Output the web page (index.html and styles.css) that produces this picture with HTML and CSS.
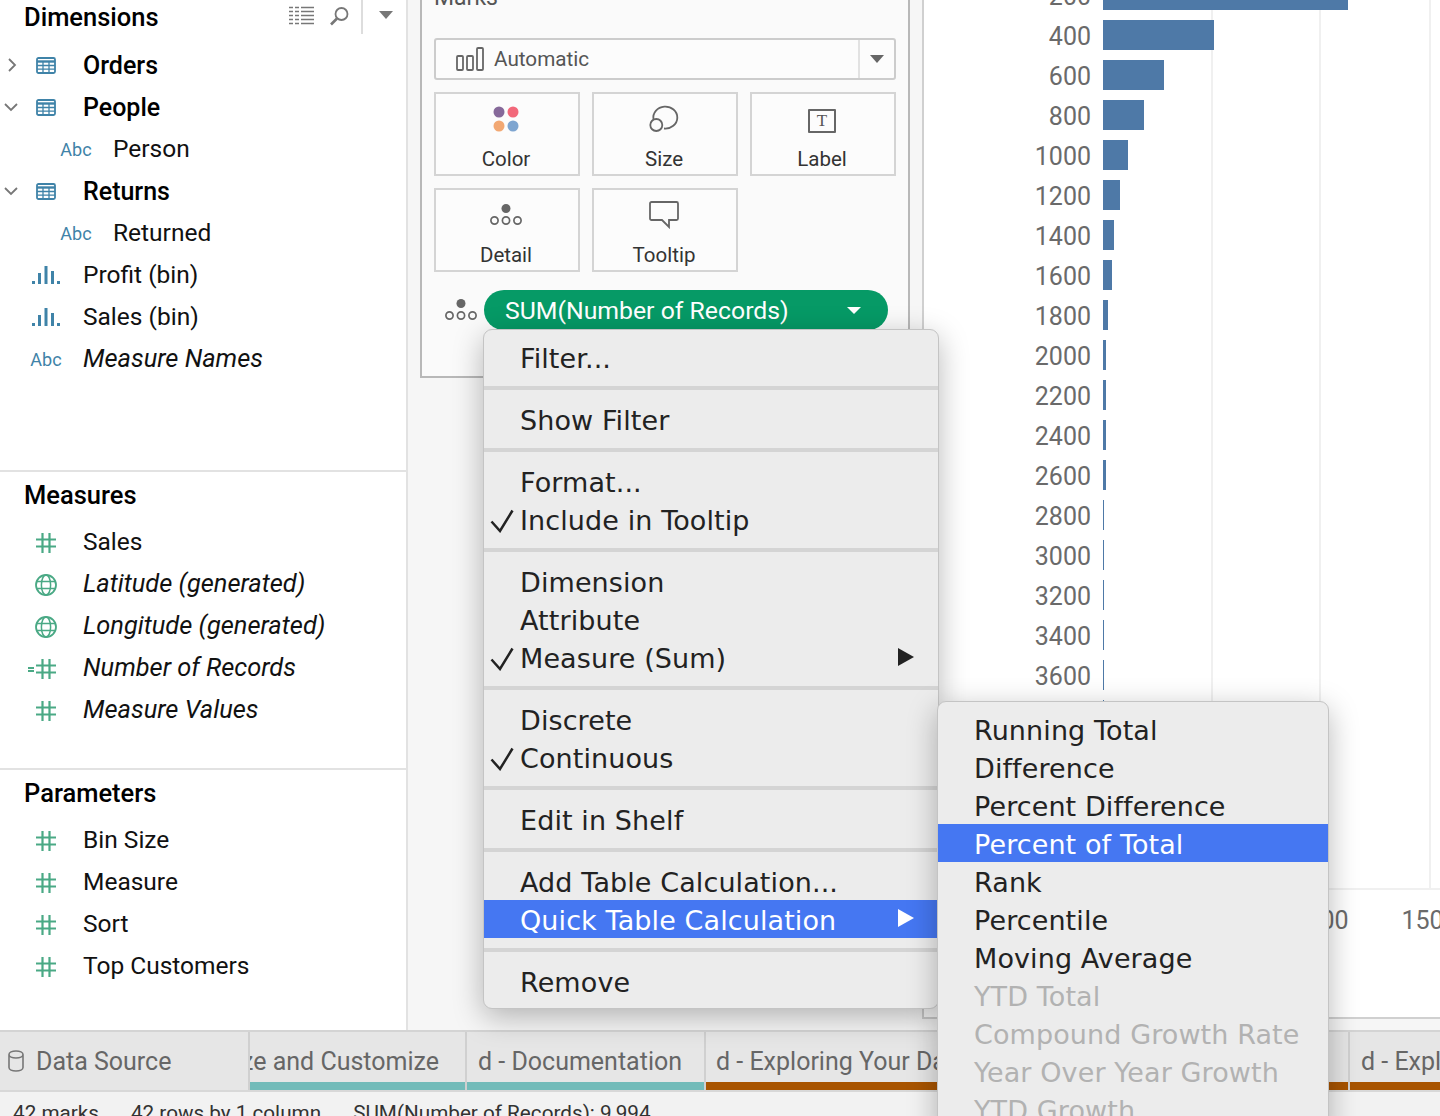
FILE: index.html
```html
<!DOCTYPE html>
<html lang="en">
<head>
<meta charset="utf-8">
<title>Tableau worksheet</title>
<link rel="stylesheet" href="styles.css">
</head>
<body>
<svg class="defs" width="0" height="0" aria-hidden="true">
  <symbol id="i-table" viewBox="0 0 20 17"><rect x="1" y="1" width="18" height="15" rx="1.500" fill="none" stroke="currentColor" stroke-width="1.800"/><path d="M1 4.500h18" stroke="currentColor" stroke-width="2.400"/><path d="M1 8.500h18M1 12.200h18M7 4v12M13 4v12" stroke="currentColor" stroke-width="1.300" fill="none"/></symbol>
  <symbol id="i-hash" viewBox="0 0 20 20"><path d="M6.500 0v20M13.500 0v20M0 6.500h20M0 13.500h20" stroke="currentColor" stroke-width="2.200" fill="none"/></symbol>
  <symbol id="i-globe" viewBox="0 0 22 22"><circle cx="11" cy="11" r="10" fill="none" stroke="currentColor" stroke-width="1.800"/><ellipse cx="11" cy="11" rx="4.600" ry="10" fill="none" stroke="currentColor" stroke-width="1.500"/><path d="M1.500 7.500h19M1.500 14.500h19" stroke="currentColor" stroke-width="1.500"/></symbol>
  <symbol id="i-bins" viewBox="0 0 28 18"><path d="M0 15h3v3H0zM6 7h3v11H6zM12.500 0h3v18h-3zM19 5h3v13h-3zM25 15h3v3h-3z" fill="currentColor"/></symbol>
  <symbol id="i-chev-r" viewBox="0 0 10 14"><path d="M2 1l6 6-6 6" fill="none" stroke="currentColor" stroke-width="1.800"/></symbol>
  <symbol id="i-chev-d" viewBox="0 0 14 10"><path d="M1 2l6 6 6-6" fill="none" stroke="currentColor" stroke-width="1.800"/></symbol>
  <symbol id="i-detail" viewBox="0 0 32 22"><circle cx="16" cy="4.500" r="4.500" fill="currentColor"/><circle cx="4.500" cy="16.500" r="3.600" fill="none" stroke="currentColor" stroke-width="1.700"/><circle cx="16" cy="16.500" r="3.600" fill="none" stroke="currentColor" stroke-width="1.700"/><circle cx="27.500" cy="16.500" r="3.600" fill="none" stroke="currentColor" stroke-width="1.700"/></symbol>
  <symbol id="i-check" viewBox="0 0 24 24"><path d="M1.500 12.500l8.500 9.500L22.500 1.500" fill="none" stroke="currentColor" stroke-width="2.500"/></symbol>
</svg>

<div class="app">
  <div class="main">
    <aside class="sidebar">
      <section class="group group-dim">
        <header class="dim-head">
          <h2 class="group-title">Dimensions</h2>
          <svg class="tool tool-list" width="25" height="19" viewBox="0 0 25 19"><path d="M0 1.500h4M6 1.500h4M12 1.500h13M0 5.500h4M6 5.500h4M12 5.500h13M0 9.500h4M6 9.500h4M12 9.500h13M0 13.500h4M6 13.500h4M12 13.500h13M0 17.500h4M6 17.500h4M12 17.500h13" stroke="#777" stroke-width="1.500" fill="none"/></svg>
          <svg class="tool tool-search" width="19" height="19" viewBox="0 0 19 19"><circle cx="11.500" cy="7" r="6" fill="none" stroke="#777" stroke-width="1.800"/><path d="M7 11.500L1 17.500" stroke="#777" stroke-width="2.600" fill="none"/></svg>
          <span class="tool-sep"></span>
          <span class="tri tri-menu"></span>
        </header>
        <div class="row"><span class="tw"><svg class="tw-r" width="10" height="14"><use href="#i-chev-r"/></svg></span><span class="ic ic-blue"><svg width="20" height="17"><use href="#i-table"/></svg></span><span class="lbl strong">Orders</span></div>
        <div class="row"><span class="tw"><svg class="tw-d" width="14" height="10"><use href="#i-chev-d"/></svg></span><span class="ic ic-blue"><svg width="20" height="17"><use href="#i-table"/></svg></span><span class="lbl strong">People</span></div>
        <div class="row nested"><span class="tw"></span><span class="ic abc">Abc</span><span class="lbl">Person</span></div>
        <div class="row"><span class="tw"><svg class="tw-d" width="14" height="10"><use href="#i-chev-d"/></svg></span><span class="ic ic-blue"><svg width="20" height="17"><use href="#i-table"/></svg></span><span class="lbl strong">Returns</span></div>
        <div class="row nested"><span class="tw"></span><span class="ic abc">Abc</span><span class="lbl">Returned</span></div>
        <div class="row"><span class="tw"></span><span class="ic ic-blue"><svg width="28" height="18"><use href="#i-bins"/></svg></span><span class="lbl">Profit (bin)</span></div>
        <div class="row"><span class="tw"></span><span class="ic ic-blue"><svg width="28" height="18"><use href="#i-bins"/></svg></span><span class="lbl">Sales (bin)</span></div>
        <div class="row"><span class="tw"></span><span class="ic abc">Abc</span><span class="lbl em">Measure Names</span></div>
      </section>
      <section class="group group-mea">
        <h2 class="group-title sec-title">Measures</h2>
        <div class="row"><span class="tw"></span><span class="ic ic-green"><svg width="20" height="20"><use href="#i-hash"/></svg></span><span class="lbl">Sales</span></div>
        <div class="row"><span class="tw"></span><span class="ic ic-green"><svg width="22" height="22"><use href="#i-globe"/></svg></span><span class="lbl em">Latitude (generated)</span></div>
        <div class="row"><span class="tw"></span><span class="ic ic-green"><svg width="22" height="22"><use href="#i-globe"/></svg></span><span class="lbl em">Longitude (generated)</span></div>
        <div class="row"><span class="tw"></span><span class="ic ic-green calc"><span class="calc-eq"></span><svg width="20" height="20"><use href="#i-hash"/></svg></span><span class="lbl em">Number of Records</span></div>
        <div class="row"><span class="tw"></span><span class="ic ic-green"><svg width="20" height="20"><use href="#i-hash"/></svg></span><span class="lbl em">Measure Values</span></div>
      </section>
      <section class="group group-par">
        <h2 class="group-title sec-title">Parameters</h2>
        <div class="row"><span class="tw"></span><span class="ic ic-green"><svg width="20" height="20"><use href="#i-hash"/></svg></span><span class="lbl">Bin Size</span></div>
        <div class="row"><span class="tw"></span><span class="ic ic-green"><svg width="20" height="20"><use href="#i-hash"/></svg></span><span class="lbl">Measure</span></div>
        <div class="row"><span class="tw"></span><span class="ic ic-green"><svg width="20" height="20"><use href="#i-hash"/></svg></span><span class="lbl">Sort</span></div>
        <div class="row"><span class="tw"></span><span class="ic ic-green"><svg width="20" height="20"><use href="#i-hash"/></svg></span><span class="lbl">Top Customers</span></div>
      </section>
    </aside>

    <div class="shelves">
      <div class="marks">
        <div class="marks-title">Marks</div>
        <div class="mark-type">
          <svg class="mt-icon" width="28" height="24" viewBox="0 0 28 24"><rect x="1" y="9" width="6" height="14" rx="1" fill="none" stroke="#666" stroke-width="1.800"/><rect x="11" y="9" width="6" height="14" rx="1" fill="none" stroke="#666" stroke-width="1.800"/><rect x="21" y="1" width="6" height="22" rx="1" fill="none" stroke="#666" stroke-width="1.800"/></svg>
          <span class="mt-text">Automatic</span>
          <span class="mt-drop"><span class="tri tri-small"></span></span>
        </div>
        <div class="cards">
          <div class="card">
            <svg width="26" height="26" viewBox="0 0 26 26"><circle cx="6" cy="6" r="5.500" fill="#86699a"/><circle cx="20" cy="6" r="5.500" fill="#f2687a"/><circle cx="6" cy="20" r="5.500" fill="#f2a873"/><circle cx="20" cy="20" r="5.500" fill="#7ea5d0"/></svg>
            <span>Color</span>
          </div>
          <div class="card">
            <svg width="30" height="28" viewBox="0 0 30 28"><path d="M4.500 14.500A12 11 0 1 1 15 23.500" fill="none" stroke="#666" stroke-width="1.800"/><circle cx="7.300" cy="20" r="6" fill="none" stroke="#666" stroke-width="1.800"/></svg>
            <span>Size</span>
          </div>
          <div class="card">
            <span class="t-box">T</span>
            <span>Label</span>
          </div>
          <div class="card">
            <svg class="i-gray" width="32" height="22"><use href="#i-detail"/></svg>
            <span>Detail</span>
          </div>
          <div class="card">
            <svg width="30" height="28" viewBox="0 0 30 28"><path d="M2.500 1h25a1.500 1.500 0 0 1 1.500 1.500v15a1.500 1.500 0 0 1-1.500 1.500H20v7l-7-7H2.500A1.500 1.500 0 0 1 1 17.500v-15A1.500 1.500 0 0 1 2.500 1z" fill="none" stroke="#666" stroke-width="1.800"/></svg>
            <span>Tooltip</span>
          </div>
        </div>
        <div class="pill-row">
          <svg class="i-gray" width="32" height="22"><use href="#i-detail"/></svg>
          <div class="pill"><span>SUM(Number of Records)</span><span class="tri tri-white"></span></div>
        </div>
      </div>
    </div>

    <div class="chart">
      <div class="plot">
        <div class="bar-row"><span class="tick">200</span><span class="bar" style="width:245px"></span></div>
        <div class="bar-row"><span class="tick">400</span><span class="bar" style="width:111px"></span></div>
        <div class="bar-row"><span class="tick">600</span><span class="bar" style="width:61px"></span></div>
        <div class="bar-row"><span class="tick">800</span><span class="bar" style="width:41px"></span></div>
        <div class="bar-row"><span class="tick">1000</span><span class="bar" style="width:25px"></span></div>
        <div class="bar-row"><span class="tick">1200</span><span class="bar" style="width:17px"></span></div>
        <div class="bar-row"><span class="tick">1400</span><span class="bar" style="width:11px"></span></div>
        <div class="bar-row"><span class="tick">1600</span><span class="bar" style="width:9px"></span></div>
        <div class="bar-row"><span class="tick">1800</span><span class="bar" style="width:5px"></span></div>
        <div class="bar-row"><span class="tick">2000</span><span class="bar" style="width:3px"></span></div>
        <div class="bar-row"><span class="tick">2200</span><span class="bar" style="width:3px"></span></div>
        <div class="bar-row"><span class="tick">2400</span><span class="bar" style="width:3px"></span></div>
        <div class="bar-row"><span class="tick">2600</span><span class="bar" style="width:3px"></span></div>
        <div class="bar-row"><span class="tick">2800</span><span class="bar" style="width:1px"></span></div>
        <div class="bar-row"><span class="tick">3000</span><span class="bar" style="width:1px"></span></div>
        <div class="bar-row"><span class="tick">3200</span><span class="bar" style="width:1px"></span></div>
        <div class="bar-row"><span class="tick">3400</span><span class="bar" style="width:1px"></span></div>
        <div class="bar-row"><span class="tick">3600</span><span class="bar" style="width:1px"></span></div>
        <div class="bar-row"><span class="tick">3800</span><span class="bar" style="width:1px"></span></div>
        <div class="bar-row"><span class="tick">4000</span><span class="bar" style="width:1px"></span></div>
        <div class="bar-row"><span class="tick">4200</span><span class="bar" style="width:1px"></span></div>
        <div class="bar-row"><span class="tick">4400</span><span class="bar" style="width:1px"></span></div>
        <div class="bar-row"><span class="tick">4600</span><span class="bar" style="width:1px"></span></div>
      </div>
      <div class="axis">
        <span>500</span><span>1000</span><span>1500</span>
      </div>
    </div>
  </div>

  <div class="tabs">
    <div class="tab tab-source">
      <svg width="16" height="22" viewBox="0 0 16 22"><path d="M1 4.500C1 2.500 4 1 8 1s7 1.500 7 3.500v13c0 2-3 3.500-7 3.500s-7-1.500-7-3.500zM1 4.500C1 6.500 4 8 8 8s7-1.500 7-3.500" fill="none" stroke="#777" stroke-width="1.600"/></svg>
      <span>Data Source</span>
    </div>
    <div class="tab tab-a teal"><span>d - Visualize and Customize</span></div>
    <div class="tab tab-b teal"><span>d - Documentation</span></div>
    <div class="tab tab-c rust"><span>d - Exploring Your Data</span></div>
    <div class="tab tab-d rust"><span>d - Exploring Your Data</span></div>
  </div>
  <div class="status">
    <span class="st-a">42 marks</span><span class="st-b">42 rows by 1 column</span><span>SUM(Number of Records): 9,994</span>
  </div>
</div>

<nav class="menu menu-main">
  <div class="m-sec first"><div class="mi">Filter...</div></div>
  <div class="m-sec"><div class="mi">Show Filter</div></div>
  <div class="m-sec">
    <div class="mi">Format...</div>
    <div class="mi"><svg class="chk" width="24" height="24"><use href="#i-check"/></svg>Include in Tooltip</div>
  </div>
  <div class="m-sec">
    <div class="mi">Dimension</div>
    <div class="mi">Attribute</div>
    <div class="mi"><svg class="chk" width="24" height="24"><use href="#i-check"/></svg>Measure (Sum)<span class="sub-arrow"></span></div>
  </div>
  <div class="m-sec">
    <div class="mi">Discrete</div>
    <div class="mi"><svg class="chk" width="24" height="24"><use href="#i-check"/></svg>Continuous</div>
  </div>
  <div class="m-sec"><div class="mi">Edit in Shelf</div></div>
  <div class="m-sec m-calc">
    <div class="mi">Add Table Calculation...</div>
    <div class="mi hot">Quick Table Calculation<span class="sub-arrow"></span></div>
  </div>
  <div class="m-sec last"><div class="mi">Remove</div></div>
</nav>

<nav class="menu menu-sub">
  <div class="mi">Running Total</div>
  <div class="mi">Difference</div>
  <div class="mi">Percent Difference</div>
  <div class="mi hot">Percent of Total</div>
  <div class="mi">Rank</div>
  <div class="mi">Percentile</div>
  <div class="mi">Moving Average</div>
  <div class="mi off">YTD Total</div>
  <div class="mi off">Compound Growth Rate</div>
  <div class="mi off">Year Over Year Growth</div>
  <div class="mi off">YTD Growth</div>
</nav>
</body>
</html>
```

FILE: styles.css
```css
* { box-sizing: border-box; }
html, body { margin: 0; padding: 0; height: 1116px; overflow: hidden; }
body { position: relative; width: 1440px; background: #fff; font-family: Roboto, "Liberation Sans", sans-serif; color: #111; }
.defs { position: absolute; }
.app { display: flex; flex-direction: column; height: 1116px; overflow: hidden; }
.main { display: grid; grid-template-columns: 408px 514px 1fr; height: 1030px; overflow: hidden; background: #f6f6f6; }

/* data pane */
.sidebar { background: #fff; border-right: 2px solid #e2e2e2; display: flex; flex-direction: column; }
.group-dim { height: 470px; }
.group-mea { height: 298px; border-top: 2px solid #e2e2e2; }
.group-par { flex: 1; border-top: 2px solid #e2e2e2; }
.group-title { margin: 0; font-size: 25.500px; font-weight: 500; color: #000; padding-left: 24px; }
.dim-head { display: flex; align-items: center; height: 34px; margin-bottom: 10px; position: relative; }
.dim-head .group-title { flex: 1; }
.tool-list { margin-right: 16px; margin-top: -3px; }
.tool-search { margin-right: 12px; margin-top: -2px; }
.tool-sep { width: 2px; height: 34px; background: #ddd; margin-right: 16px; }
.tri { width: 0; height: 0; border-style: solid; border-color: #777 transparent transparent; }
.tri-menu { border-width: 8px 7px 0; margin-right: 13px; margin-top: -4px; }
.sec-title { height: 48px; line-height: 46px; }
.row { display: flex; align-items: center; height: 42px; font-size: 24.500px; }
.row.nested { padding-left: 30px; }
.tw { width: 24px; display: flex; align-items: center; color: #777; }
.tw-r { margin-left: 7px; }
.tw-d { margin-left: 4px; }
.ic { width: 44px; display: flex; align-items: center; justify-content: center; flex: none; }
.group-mea .ic, .group-par .ic { margin-top: 4px; }
.ic-blue { color: #3f83a8; }
.ic-green { color: #4aa985; }
.abc { color: #3f83a8; font-size: 18px; }
.calc { position: relative; }
.calc-eq { position: absolute; left: 4px; top: 8px; width: 6px; height: 5px; border-top: 2px solid #4aa985; border-bottom: 2px solid #4aa985; }
.lbl { margin-left: 15px; white-space: nowrap; }
.group-dim .lbl:not(.strong) { margin-bottom: 2px; }
.strong { font-weight: 500; font-size: 25px; color: #000; }
.em { font-style: italic; font-size: 25.400px; }

/* shelves */
.shelves { padding-left: 12px; }
.marks { width: 490px; height: 398px; margin-top: -20px; padding: 0 12px; background: #fafafa; border: 2px solid #b8b8b8; border-top: 0; }
.marks-title { height: 58px; font-size: 23px; color: #555; line-height: 36px; }
.mark-type { display: flex; align-items: center; height: 42px; border: 2px solid #ccc; border-radius: 3px; background: #fcfcfc; color: #555; font-size: 20.700px; padding-left: 20px; }
.mt-text { margin-left: 10px; flex: 1; }
.mt-drop { width: 36px; height: 38px; border-left: 2px solid #e2e2e2; display: flex; align-items: center; justify-content: center; }
.tri-small { border-width: 8px 7px 0; border-color: #666 transparent transparent; }
.cards { display: grid; grid-template-columns: repeat(3, 146px); grid-auto-rows: 84px; gap: 12px; margin-top: 12px; }
.card { border: 2px solid #d4d4d4; background: #fcfcfc; display: flex; flex-direction: column; align-items: center; font-size: 20.500px; color: #333; padding: 11px 2px 0 0; }
.card svg { height: 28px; flex: none; }
.card > span:last-child { margin-top: 13px; line-height: 26px; }
.i-gray { color: #666; }
.t-box { width: 28px; height: 24px; margin-top: 4px; flex: none; border: 2px solid #666; border-radius: 1px; font-family: "Liberation Serif", serif; font-size: 17px; line-height: 20px; text-align: center; color: #555; }
.pill-row { display: flex; align-items: center; margin-top: 18px; height: 40px; padding-left: 11px; }
.pill-row > svg { margin-right: 7px; flex: none; }
.pill { display: flex; align-items: center; width: 404px; height: 40px; border-radius: 20px; background: #069a66; color: #fff; font-size: 24.800px; padding-left: 21px; }
.pill span:first-child { flex: 1; }
.tri-white { border-width: 7px 7px 0; border-color: #fff transparent transparent; margin-right: 27px; }

/* chart */
.chart { height: 1019px; background: #fff; border-left: 2px solid #d0d0d0; border-bottom: 2px solid #d0d0d0; overflow: hidden; }
.plot { margin-top: -20px; height: 908px; overflow: hidden; background: linear-gradient(#f0f0f0, #f0f0f0) 287px 0/2px 100% no-repeat, linear-gradient(#f0f0f0, #f0f0f0) 395px 0/2px 100% no-repeat, linear-gradient(#f0f0f0, #f0f0f0) 505px 0/2px 100% no-repeat; }
.bar-row { display: flex; height: 40px; }
.tick { width: 167px; margin-right: 12px; height: 30px; line-height: 34px; text-align: right; font-size: 25px; color: #6a6a6a; flex: none; }
.bar { height: 30px; background: #4e79a7; }
.axis { border-top: 2px solid #f0f0f0; display: flex; padding-left: 233px; font-size: 25px; color: #6a6a6a; }
.axis span { width: 109px; flex: none; text-align: center; padding-top: 16px; }

/* bottom tabs */
.tabs { display: flex; height: 62px; background: #e6e6e6; border-top: 2px solid #d4d4d4; border-bottom: 2px solid #d8d8d8; overflow: hidden; font-size: 25px; color: #666; }
.tab { display: flex; align-items: center; flex: none; overflow: hidden; white-space: nowrap; height: 58px; }
.tab-source { width: 250px; padding-left: 8px; }
.tab-source svg { margin-right: 12px; }
.tab-source, .tab-a, .tab-b, .tab-c { border-right: 2px solid #d0d0d0; }
.tab-a { width: 217px; justify-content: flex-end; padding-right: 26px; }
.tab-b { width: 239px; padding-left: 11px; }
.tab-c { width: 644px; padding-left: 10px; }
.tab-d { flex: 1; padding-left: 11px; }
.teal { box-shadow: inset 0 -8px 0 #72bbb9; }
.rust { box-shadow: inset 0 -8px 0 #a85400; }
.status { height: 24px; background: #f2f2f2; font-size: 20.700px; color: #333; padding-left: 13px; white-space: nowrap; line-height: 24px; padding-top: 9px; overflow: hidden; }
.st-a { margin-right: 32px; }
.st-b { margin-right: 32px; }

/* context menus */
.menu { position: absolute; background: #ececec; border: 1px solid #c4c4c4; border-radius: 9px; box-shadow: 0 8px 30px rgba(0,0,0,.28); font-family: "DejaVu Sans", Verdana, sans-serif; font-size: 27px; letter-spacing: .1px; color: #222; overflow: hidden; }
.menu-main { left: 483px; top: 329px; width: 456px; height: 680px; }
.menu-sub { left: 937px; top: 701px; width: 392px; height: 440px; padding-top: 8px; }
.m-sec { padding: 11px 0 9px; border-bottom: 4px solid #d4d4d4; }
.m-sec.first { padding-top: 9px; }
.m-sec.last { border-bottom: 0; }
.m-calc { padding-bottom: 10px; }
.mi { position: relative; height: 38px; line-height: 40px; padding-left: 36px; white-space: nowrap; }
.menu-sub .mi { line-height: 42px; }
.m-calc .hot { margin-top: -1px; line-height: 42px; }
.hot { background: #4577f2; color: #fff; }
.off { color: #b2b2b2; }
.chk { position: absolute; left: 6px; top: 8px; color: #222; }
.sub-arrow { position: absolute; right: 24px; top: 9px; width: 0; height: 0; border-style: solid; border-width: 9px 0 9px 16px; border-color: transparent transparent transparent currentColor; }
```
